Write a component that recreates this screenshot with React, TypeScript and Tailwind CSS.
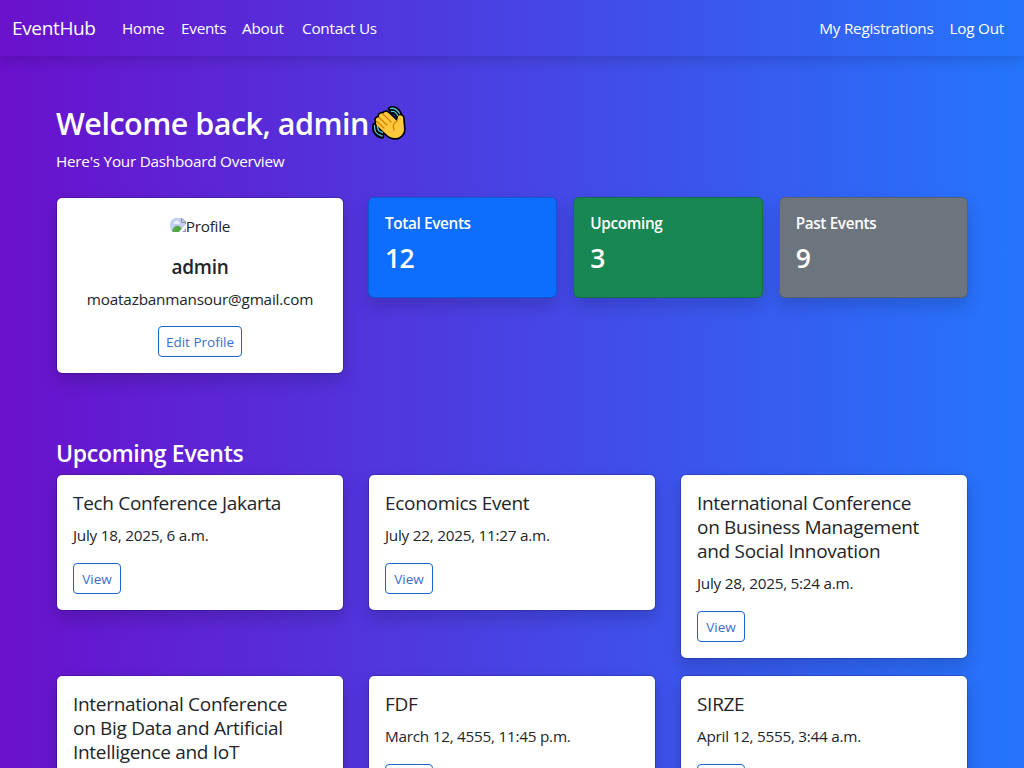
const viewButton =
  "inline-flex h-[31px] items-center justify-center rounded border border-[#1b67c9] text-[13.5px] text-[#3a6fce]";

const card =
  "rounded-md border border-black/[0.175] bg-white bg-clip-padding p-4 shadow-[0_8px_16px_rgba(0,0,0,0.15)]";

function WavingHand() {
  return (
    <svg width="36" height="36" viewBox="0 0 36 36" fill="none" strokeLinecap="round" strokeLinejoin="round">
      <path d="M18 4C21 2 26 4 28 9M20 7C22 6.500 24 8 26 11M2.500 20C1 26 5 31 10 31.500M5 20C4.500 24 7 27.500 10.500 28" stroke="#000" strokeWidth="4.500" />
      <path d="M4.500 16.500C2.800 14.500 4.500 12 7 12.500C6.500 9.500 8.500 8 11 8.800C12.500 6.500 15 6.500 17 8.500L25 16L26 11.500C27 9.500 30.500 10 31 12.500L32 24C32 30 27 33.500 22 33C18.500 32.800 16 31 13 28L5.500 21C4 19.500 3.700 18 4.500 16.500Z" fill="#ffc83d" stroke="#000" strokeWidth="3.400" />
      <path d="M18.500 3.500C22 2.500 26 5 27.500 8.500M19.500 6.500C22 6 24.500 8 25.500 10.500M2.500 20.500C2 26 5 30 10 31M5.500 21C5.500 24.500 7.500 27 10.500 27.500" stroke="#50c8df" strokeWidth="1.300" />
      <path d="M4.500 16.500C2.800 14.500 4.500 12 7 12.500C6.500 9.500 8.500 8 11 8.800C12.500 6.500 15 6.500 17 8.500L25 16L26 11.500C27 9.500 30.500 10 31 12.500L32 24C32 30 27 33.500 22 33C18.500 32.800 16 31 13 28L5.500 21C4 19.500 3.700 18 4.500 16.500Z" fill="#ffc83d" />
      <path d="M5 16.500L12 23M7 12.500L15 20M11 9L19 17M25 16C21.500 18 20.500 21 22 25" stroke="#d67d00" strokeWidth="1.200" />
    </svg>
  );
}

function BrokenImage() {
  return (
    <svg width="16" height="16" viewBox="0 0 16 16">
      <path d="M5 0H12L16 4V14H3C1 13 0 10 0 7C0 3 2 1 5 0Z" fill="#c0cff2" />
      <path d="M4 5Q3 3 6 3Q8 1 9 4Q11 5 9 6H4Z" fill="#e9effc" />
      <path d="M2 13C4 7 9 6 12 11L9 14H3Z" fill="#55a944" />
      <path d="M9 14L16 6V10L12 14Z" fill="#fff" />
      <path d="M11 .5H12L15.500 4V6M11.500 1V4.500H15M13 13.500H15.500V11" fill="none" stroke="#8d929b" />
    </svg>
  );
}

const stats = [
  { label: "Total Events", value: "12", tone: "bg-[#0d6efd]", text: "tracking-[-0.35px]" },
  { label: "Upcoming", value: "3", tone: "bg-[#198754]", text: "tracking-[-0.35px]" },
  { label: "Past Events", value: "9", tone: "bg-[#6c757d]", text: "tracking-[-0.35px]" },
];

const events = [
  { lines: ["Tech Conference Jakarta"], date: "July 18, 2025, 6 a.m." },
  { lines: ["Economics Event"], date: "July 22, 2025, 11:27 a.m." },
  { lines: ["International Conference", "on Business Management", "and Social Innovation"], date: "July 28, 2025, 5:24 a.m." },
  { lines: ["International Conference", "on Big Data and Artificial", "Intelligence and IoT"], date: "August 5, 2025, 9 a.m." },
  { lines: ["FDF"], date: "March 12, 4555, 11:45 p.m." },
  { lines: ["SIRZE"], date: "April 12, 5555, 3:44 a.m." },
];

export default function App() {
  return (
    <div className="h-screen overflow-hidden bg-linear-to-r/srgb from-[#6a11cb] to-[#2575fc] font-['Open_Sans','Noto_Sans',sans-serif] text-[15.3px] leading-6 text-[#212529]">
      <nav className="flex h-14 items-center bg-linear-to-r/srgb from-[#6a11cb] to-[#2575fc] pr-5 pl-3 text-white shadow-[0_4px_12px_rgba(0,0,0,0.15)]">
        <a className="w-[110px] text-[19px] tracking-[-0.35px]">EventHub</a>
        <div className="flex tracking-[-0.25px]">
          <a className="w-[59px]">Home</a>
          <a className="w-[61px]">Events</a>
          <a className="w-[60px]">About</a>
          <a>Contact Us</a>
        </div>
        <div className="ml-auto flex gap-4 tracking-[-0.25px]">
          <a>My Registrations</a>
          <a>Log Out</a>
        </div>
      </nav>
      <main className="px-14 pt-12">
        <h1 className="flex h-[38px] items-center text-[30.5px] font-semibold tracking-[-0.5px] whitespace-nowrap text-white">
          <span className="w-[316px]">Welcome back, admin</span>
          <WavingHand />
        </h1>
        <p className="mt-[7px] tracking-[-0.25px] text-white">Here's Your Dashboard Overview</p>
        <section className="mt-6 flex h-[177px] items-start gap-6">
          <div className={`${card} flex h-[177px] w-72 flex-col items-center`}>
            <div className="flex h-6 items-center tracking-[-0.25px]">
              <BrokenImage />
              <span>Profile</span>
            </div>
            <h5 className="mt-[17px] text-[19px] font-semibold tracking-[-0.3px]">admin</h5>
            <p className="mt-2 tracking-[-0.2px]">moatazbanmansour@gmail.com</p>
            <button className={`${viewButton} mt-[15px] w-[84px] shrink-0`}>Edit Profile</button>
          </div>
          <div className="grid flex-1 grid-cols-3 gap-4">
            {stats.map((s) => (
              <div key={s.label} className={`${s.tone} h-[101px] rounded-md border border-black/[0.175] p-4 text-white shadow-[0_8px_16px_rgba(0,0,0,0.15)]`}>
                <h6 className={`${s.text} text-[15.3px] leading-[19px] font-semibold`}>{s.label}</h6>
                <p className="mt-2 text-[26.5px] leading-[34px] font-semibold tracking-[-0.7px]">{s.value}</p>
              </div>
            ))}
          </div>
        </section>
        <h2 className="mt-[65px] h-[35px] text-[23px] leading-[28px] font-semibold tracking-[-0.3px] text-white">Upcoming Events</h2>
        <section className="grid grid-cols-3 items-start gap-x-6 gap-y-4">
          {events.map((e) => (
            <div key={e.lines.join(" ") + e.date} className={card}>
              <h5 className="text-[19px] leading-6 font-medium tracking-[-0.3px] whitespace-nowrap">
                {e.lines.map((line) => (
                  <span key={line} className="block">{line}</span>
                ))}
              </h5>
              <p className="mt-2 tracking-[-0.25px]">{e.date}</p>
              <button className={`${viewButton} mt-4 w-12`}>View</button>
            </div>
          ))}
        </section>
      </main>
    </div>
  );
}
